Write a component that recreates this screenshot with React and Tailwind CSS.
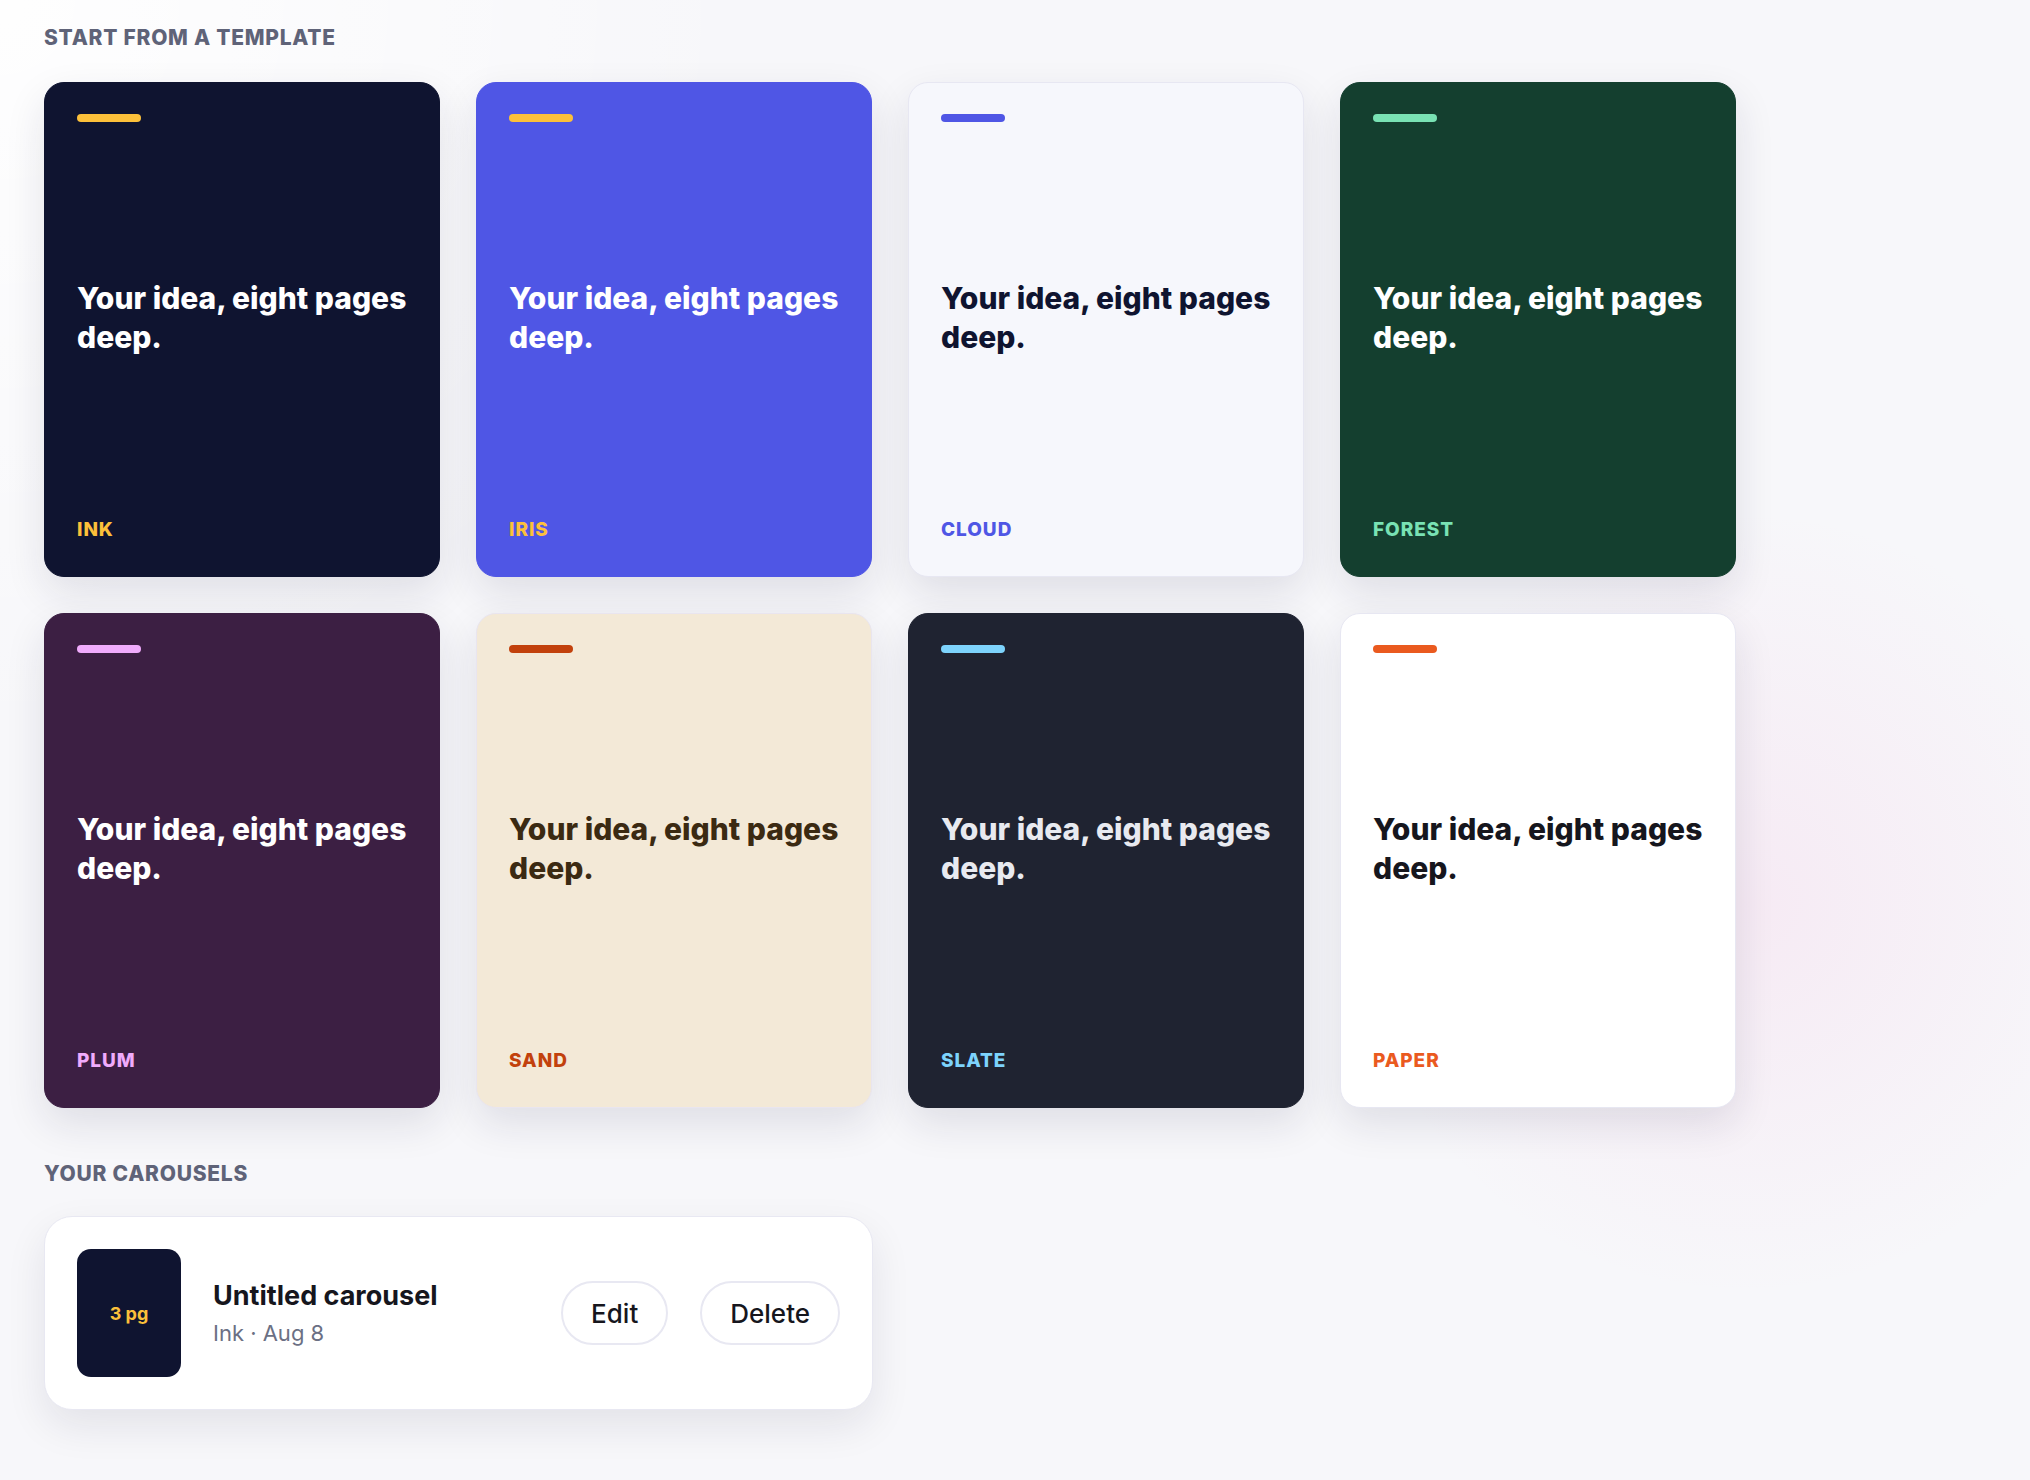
const FONT = { fontFamily: 'Inter, "Noto Sans", "Liberation Sans", sans-serif' };

const templates = [
  { name: 'INK', card: 'bg-[#0f1430] border-[#0f1430]', bar: 'bg-[#fcc03a]', text: 'text-white', label: 'text-[#fcc03a]' },
  { name: 'IRIS', card: 'bg-[#4f56e5] border-[#4f56e5]', bar: 'bg-[#fcc03a]', text: 'text-white', label: 'text-[#fcc03a]' },
  { name: 'CLOUD', card: 'bg-[#f6f7fc] border-[#e7e7f2]', bar: 'bg-[#4f56e5]', text: 'text-[#0f1430]', label: 'text-[#4f56e5]' },
  { name: 'FOREST', card: 'bg-[#143f2f] border-[#143f2f]', bar: 'bg-[#79e2b4]', text: 'text-white', label: 'text-[#79e2b4]' },
  { name: 'PLUM', card: 'bg-[#3c1f43] border-[#3c1f43]', bar: 'bg-[#f0abfc]', text: 'text-white', label: 'text-[#f0abfc]' },
  { name: 'SAND', card: 'bg-[#f3e9d7] border-[#e9e5ef]', bar: 'bg-[#c2410c]', text: 'text-[#3b2a12]', label: 'text-[#c2410c]' },
  { name: 'SLATE', card: 'bg-[#1f2331] border-[#1f2331]', bar: 'bg-[#7dd3fc]', text: 'text-[#e8eaf0]', label: 'text-[#7dd3fc]' },
  { name: 'PAPER', card: 'bg-white border-[#e7e7f2]', bar: 'bg-[#ea5a1f]', text: 'text-[#16161d]', label: 'text-[#ea5a1f]' },
];

function TemplateCard({ t }) {
  return (
    <div
      className={`flex h-[495px] w-[396px] flex-col rounded-[20px] border px-[32px] pt-[31px] pb-[34px] shadow-[0_16px_40px_rgba(25,25,60,0.11)] ${t.card}`}
    >
      <div className={`h-[8px] w-[64px] rounded-full ${t.bar}`} />
      <div className="flex flex-1 items-center pb-[4px]">
        <h3 className={`text-[30px] leading-[39px] font-extrabold ${t.text}`}>
          Your idea, eight pages deep.
        </h3>
      </div>
      <div className={`text-[19px] leading-[24px] font-extrabold tracking-[0.05em] ${t.label}`}>{t.name}</div>
    </div>
  );
}

export default function App() {
  return (
    <div
      style={FONT}
      className="min-h-screen bg-[#f7f7fa] bg-[radial-gradient(circle_at_86%_61%,rgba(236,120,190,0.10),transparent_20%),radial-gradient(circle_at_0%_0%,rgba(255,255,255,0.9),transparent_30%)] pt-[24px] pl-[44px]"
    >
      <h2 className="text-[21px] leading-[28px] font-extrabold tracking-[0.035em] text-[#5f6378]">START FROM A TEMPLATE</h2>

      <div className="mt-[30px] grid w-max grid-cols-[repeat(4,396px)] gap-[36px]">
        {templates.map((t) => (
          <TemplateCard key={t.name} t={t} />
        ))}
      </div>

      <h2 className="mt-[52px] text-[21px] leading-[28px] font-extrabold tracking-[0.035em] text-[#5f6378]">YOUR CAROUSELS</h2>

      <div className="mt-[28px] flex w-[829px] items-center rounded-[28px] border border-[#e8e8f2] bg-white p-[32px] shadow-[0_16px_40px_rgba(25,25,60,0.09)]">
        <div className="flex h-[128px] w-[104px] shrink-0 items-center justify-center rounded-[14px] bg-[#0f1430]">
          <span className="text-[18px] font-bold text-[#fcc03a]">3 pg</span>
        </div>
        <div className="ml-[32px] flex flex-1 flex-col">
          <div className="text-[27px] leading-[34px] font-bold text-[#16161d]">Untitled carousel</div>
          <div className="mt-[6px] text-[22px] leading-[28px] text-[#6b7084]">Ink · Aug 8</div>
        </div>
        <div className="flex items-center gap-[32px]">
          <button className="h-[64px] rounded-full border-2 border-[#e8e8f2] bg-white px-[28px] text-[26px] font-medium text-[#16161d]">
            Edit
          </button>
          <button className="h-[64px] rounded-full border-2 border-[#e8e8f2] bg-white px-[28px] text-[26px] font-medium text-[#16161d]">
            Delete
          </button>
        </div>
      </div>
    </div>
  );
}
